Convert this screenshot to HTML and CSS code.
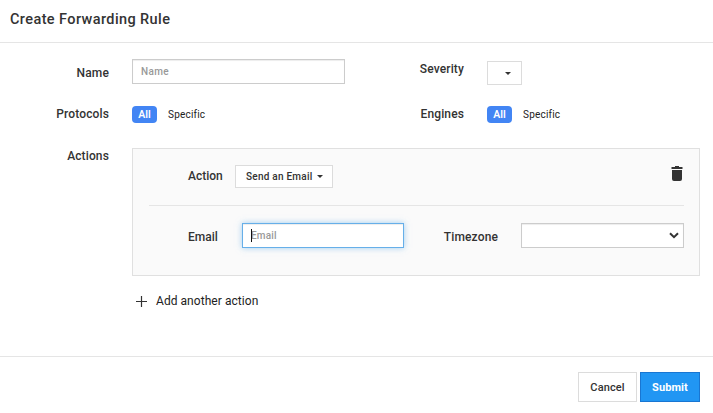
FILE: index.html
```html
<!DOCTYPE html>
<html lang="en">
<head>
<meta charset="utf-8">
<title>Create Forwarding Rule</title>
<link rel="stylesheet" href="styles.css">
</head>
<body>
<main class="dialog">
  <header class="dialog-header"><h1>Create Forwarding Rule</h1></header>
  <form class="dialog-body">
    <div class="row row-name">
      <label class="label label-name">Name</label>
      <div class="control"><input class="input input-name" type="text" placeholder="Name"></div>
      <label class="label label-severity">Severity</label>
      <div class="control"><button type="button" class="dropdown dropdown-severity"><span class="caret"></span></button></div>
    </div>
    <div class="row row-scope">
      <span class="label">Protocols</span>
      <div class="control toggle"><span class="pill">All</span><span class="option">Specific</span></div>
      <span class="label">Engines</span>
      <div class="control toggle"><span class="pill">All</span><span class="option">Specific</span></div>
    </div>
    <div class="actions">
      <span class="label">Actions</span>
      <section class="panel">
        <div class="action-row">
          <span class="label-action">Action</span>
          <button type="button" class="dropdown dropdown-action">Send an Email<span class="caret"></span></button>
          <svg class="trash" width="12" height="15" viewBox="0 0 12 15"><path fill="#333" d="M4 0h4v1h3.5v2H.5V1H4zM1 4h10v9q0 2-2 2H3q-2 0-2-2z"/></svg>
        </div>
        <div class="fields-row">
          <label class="label-email">Email</label>
          <div class="input input-email"><span class="cursor"></span>Email</div>
          <label class="label-timezone">Timezone</label>
          <div class="input select"><svg width="10" height="7" viewBox="0 0 10 7"><path d="M1 1.2l4 4 4-4" fill="none" stroke="#333" stroke-width="2"/></svg></div>
        </div>
      </section>
    </div>
    <div class="add"><svg width="11" height="11" viewBox="0 0 11 11"><path d="M5.5 0v11M0 5.5h11" stroke="#333" stroke-width="1.2"/></svg>Add another action</div>
  </form>
  <footer class="dialog-footer">
    <button type="button" class="button">Cancel</button>
    <button type="button" class="button primary">Submit</button>
  </footer>
</main>
</body>
</html>
```
FILE: styles.css
```css
* { box-sizing: border-box; }
body {
  margin: 0;
  background: #fff;
  color: #333;
  font: 500 12px/16px Roboto, sans-serif;
}
button, input { font-family: inherit; }
.dialog { display: flex; flex-direction: column; height: 413px; overflow: hidden; }
.dialog-header { height: 43px; padding: 9px 10px; border-bottom: 1px solid #e5e5e5; }
h1 { margin: 0; font-size: 14.5px; line-height: 21px; font-weight: 500; letter-spacing: .4px; }
.dialog-body { height: 313px; padding-top: 16px; }
.row { display: grid; grid-template-columns: 109px 236px 119px 1fr; align-items: start; }
.control { padding-left: 23px; }
.row-name { height: 47px; }
.row-scope { height: 16px; }
.label, .label-timezone { text-align: right; letter-spacing: .13px; }
.label-name { margin-top: 6px; }
.label-severity { margin-top: 2px; }
.input {
  display: flex;
  align-items: center;
  height: 25px;
  padding: 0 8px;
  border: 1px solid #ccc;
  border-radius: 0;
  background: #fff;
  box-shadow: inset 0 1px 1px rgba(0, 0, 0, .075);
  color: #999;
  font-size: 10px;
  font-weight: 500;
}
.input-name { width: 213px; letter-spacing: .35px; }
.input::placeholder { color: #999; opacity: 1; }
.dropdown {
  display: flex;
  align-items: center;
  border: 1px solid #dcdcdc;
  background: #fff;
  color: #333;
  font-size: 10px;
  font-weight: 500;
  padding: 0 10px;
  white-space: nowrap;
}
.dropdown-severity { width: 35px; height: 24px; margin-top: 2px; padding-left: 17px; }
.caret { border: 3px solid transparent; border-top-color: #333; border-bottom: 0; }
.toggle { display: flex; align-items: center; height: 17px; }
.pill {
  width: 25px;
  height: 17px;
  border-radius: 4px;
  background: #4285f4;
  color: #fff;
  font-size: 10.5px;
  font-weight: 600;
  line-height: 17px;
  text-align: center;
}
.option { margin-left: 11px; font-size: 10px; font-weight: 400; letter-spacing: .2px; color: #222; }
.actions { display: grid; grid-template-columns: 109px 568px; column-gap: 23px; margin-top: 26px; }
.panel { height: 128px; padding: 16px 15px 0 16px; border: 1px solid #e0e0e0; background: #fafafa; }
.action-row { display: flex; height: 41px; border-bottom: 1px solid #e5e5e5; }
.label-action { width: 86px; padding: 3px 0 0 39px; }
.dropdown-action { width: 98px; height: 23px; letter-spacing: .24px; }
.dropdown-action .caret { margin-left: 4px; }
.trash { margin: 1px 1px 0 auto; }
.fields-row { display: grid; grid-template-columns: 93px 162px 94px 23px 163px; margin-top: 17px; }
.label-email { padding: 6px 0 0 39px; }
.label-timezone { padding-top: 6px; }
.input-email {
  position: relative;
  letter-spacing: .2px;
  border-color: #66afe9;
  box-shadow: inset 0 1px 1px rgba(0, 0, 0, .075), 0 0 6px rgba(102, 175, 233, .6);
}
.cursor { position: absolute; left: 8px; top: 5px; width: 1px; height: 13px; background: #111; }
.select { grid-column: 5; justify-content: flex-end; padding-right: 4px; }
.add { display: flex; align-items: center; gap: 9px; margin: 17px 0 0 136px; font-weight: 400; letter-spacing: .05px; color: #222; }
.dialog-footer { display: flex; justify-content: flex-end; gap: 3px; height: 57px; padding: 15px 13px 0 0; border-top: 1px solid #e5e5e5; }
.button {
  width: 59px;
  height: 30px;
  padding: 0;
  border: 1px solid #dcdcdc;
  background: #fff;
  color: #333;
  font-size: 11px;
  font-weight: 500;
  letter-spacing: .1px;
}
.primary { width: 60px; border-color: #1976d2; background: #2196f3; color: #fff; font-weight: 700; }
```
